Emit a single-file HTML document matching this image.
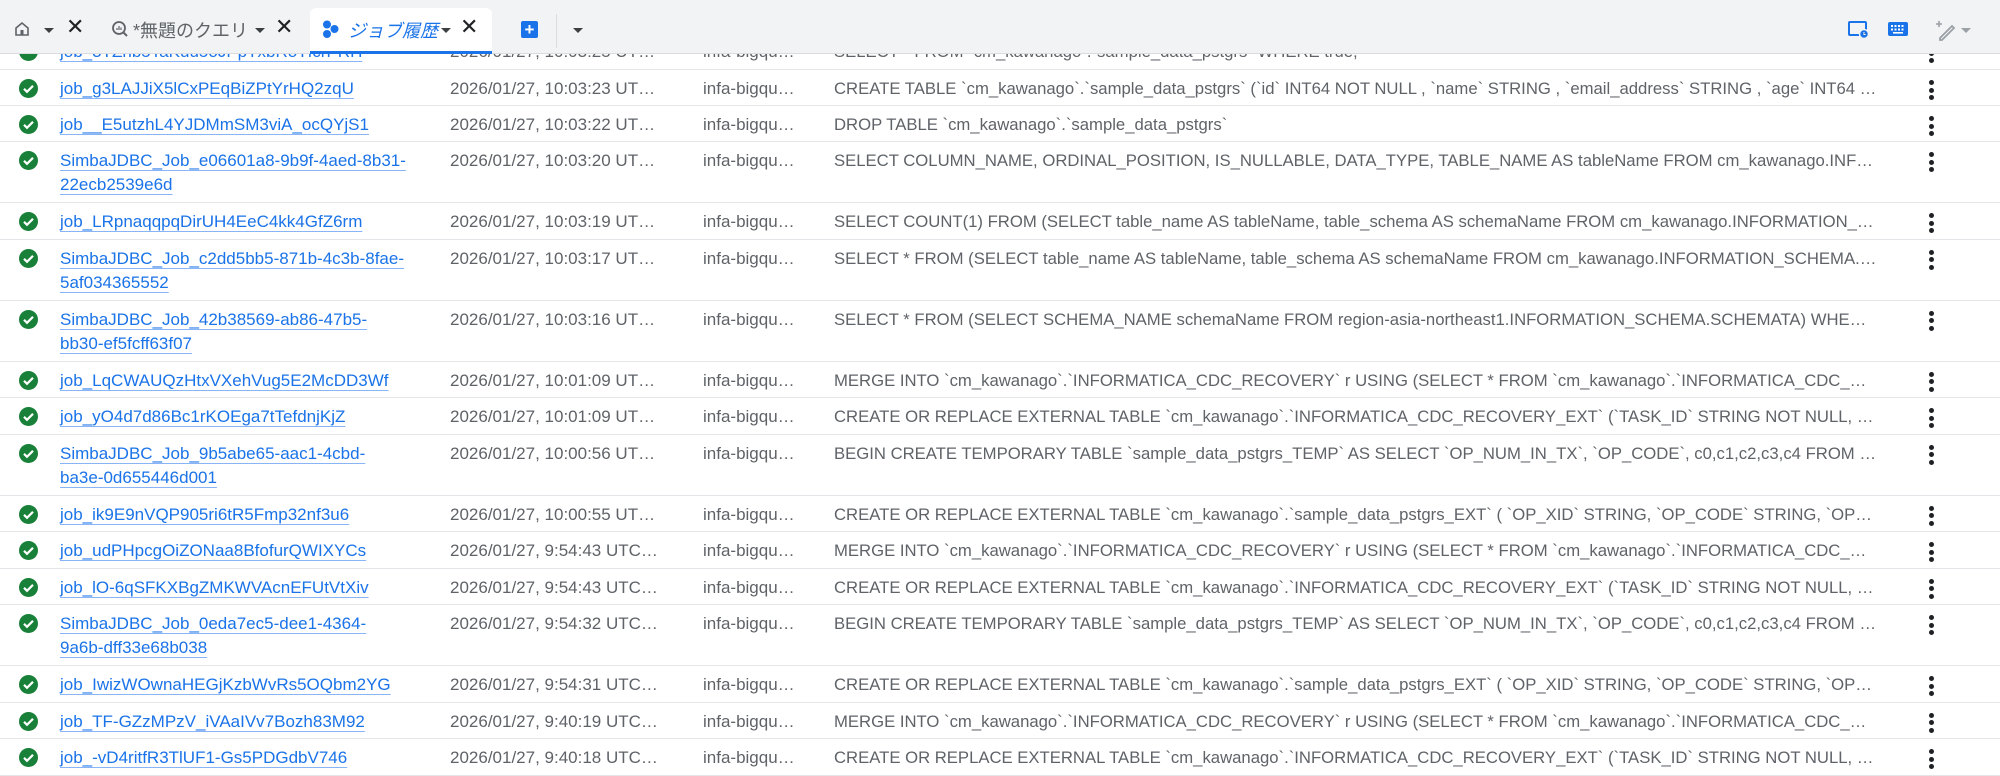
<!DOCTYPE html>
<html><head><meta charset="utf-8"><style>
*{margin:0;padding:0;box-sizing:border-box}
html,body{width:2000px;height:760px;overflow:hidden;background:#fff;font-family:"Liberation Sans","Noto Sans CJK JP",sans-serif;}
#hdr{position:absolute;left:0;top:0;width:2000px;height:54px;background:#f1f3f4;border-bottom:1px solid #dadce0;z-index:5}
.h{position:absolute;color:#3c4043;font-size:18px}
.dd{position:absolute;width:0;height:0;border-left:5px solid transparent;border-right:5px solid transparent;border-top:5px solid #3c4043;top:28px}
.r{position:absolute;left:0;width:2000px;border-bottom:1.5px solid #e3e5e8;font-size:17px;color:#5f6368}
.r .ck{position:absolute;left:19px;top:9px;width:19px;height:19px;border-radius:50%;background:#188038}
.r .ck svg{position:absolute;left:0;top:0}
.r .ln{position:absolute;left:60px;top:7px;width:360px;line-height:24px;color:#1a73e8;text-decoration:underline;text-decoration-color:#8ab4f8;text-underline-offset:4px;word-break:break-all}
.r .dt{position:absolute;left:450px;top:7px;line-height:24px;white-space:nowrap}
.r .pj{position:absolute;left:703px;top:7px;line-height:24px}
.r .q{position:absolute;left:834px;top:7px;width:1044px;line-height:24px;white-space:nowrap;overflow:hidden;text-overflow:ellipsis;font-size:16.7px}
.r .kb{position:absolute;left:1929px;top:10px;width:5px}
.r .kb i{display:block;width:5px;height:5px;border-radius:50%;background:#202124;margin-bottom:2.5px}
</style></head><body>
<div id="hdr">
 <svg class="h" style="left:14px;top:21px" width="16" height="16" viewBox="0 0 16 16"><path d="M2 7 L8 2 L14 7 V14 H2 Z" fill="none" stroke="#5f6368" stroke-width="1.6"/><rect x="6.5" y="9" width="3" height="5" fill="#5f6368"/></svg>
 <div class="dd" style="left:44px"></div>
 <div class="h" style="left:66px;top:14px;font-size:22px;color:#202124">✕</div>
 <svg class="h" style="left:111px;top:20px" width="18" height="18" viewBox="0 0 18 18"><circle cx="8" cy="8" r="6" fill="none" stroke="#5f6368" stroke-width="1.8"/><path d="M12.5 12.5 L16 16" stroke="#5f6368" stroke-width="2"/><path d="M6 10V8M8 10V6M10 10V7.5" stroke="#5f6368" stroke-width="1.2"/></svg>
 <div class="h" style="left:133px;top:17px;font-size:18px;color:#5f6368">*無題のクエリ</div>
 <div class="dd" style="left:255px"></div>
 <div class="h" style="left:275px;top:14px;font-size:22px;color:#202124">✕</div>
 <div style="position:absolute;left:310px;top:8px;width:182px;height:46px;background:#fff;border-radius:6px 6px 0 0;border-bottom:3px solid #1a73e8"></div>
 <svg class="h" style="left:322px;top:20px" width="18" height="18" viewBox="0 0 18 18"><circle cx="5" cy="4.5" r="4" fill="#1a73e8"/><circle cx="12.5" cy="9" r="4" fill="#1a73e8"/><circle cx="5" cy="14" r="4" fill="#1a73e8"/></svg>
 <div class="h" style="left:348px;top:17px;font-size:18px;color:#1a73e8;font-style:italic">ジョブ履歴</div>
 <div class="dd" style="left:441px"></div>
 <div class="h" style="left:460px;top:14px;font-size:22px;color:#202124">✕</div>
 <div style="position:absolute;left:521px;top:21px;width:17px;height:17px;background:#1a73e8;border-radius:2px;color:#fff;font-size:17px;line-height:17px;text-align:center;font-weight:bold">+</div>
 <div style="position:absolute;left:556px;top:14px;width:1px;height:34px;background:#dadce0"></div>
 <div class="dd" style="left:573px"></div>
 <svg class="h" style="left:1848px;top:20px" width="22" height="20" viewBox="0 0 22 20"><rect x="1" y="2" width="17" height="13" rx="1" fill="none" stroke="#1a73e8" stroke-width="2"/><circle cx="16" cy="14" r="4.5" fill="#1a73e8" stroke="#f1f3f4" stroke-width="1.5"/><path d="M16 12v2.5h1.5" stroke="#fff" stroke-width="1"/></svg>
 <svg class="h" style="left:1888px;top:22px" width="20" height="14" viewBox="0 0 20 14"><rect x="0" y="0" width="20" height="14" rx="2" fill="#1a73e8"/><g fill="#fff"><rect x="3" y="3" width="2" height="2"/><rect x="6.5" y="3" width="2" height="2"/><rect x="10" y="3" width="2" height="2"/><rect x="13.5" y="3" width="2" height="2"/><rect x="3" y="6.5" width="2" height="2"/><rect x="6.5" y="6.5" width="2" height="2"/><rect x="10" y="6.5" width="2" height="2"/><rect x="13.5" y="6.5" width="2" height="2"/><rect x="5" y="10" width="10" height="1.6"/></g></svg>
 <svg class="h" style="left:1935px;top:19px" width="22" height="22" viewBox="0 0 22 22"><path d="M5 19 L17 7 L19 9 L7 21 L5 21 Z" fill="none" stroke="#9aa0a6" stroke-width="1.8"/><path d="M4 2v6M1 5h6" stroke="#9aa0a6" stroke-width="1.6"/></svg>
 <div class="dd" style="left:1961px;border-top-color:#9aa0a6"></div>
</div>

<div class="r" style="top:33px;height:37px"><div class="ck"></div><div class="ln">job_3TZnb5TaKuu5oJPpTxbRoTfcrPRH</div><div class="dt">2026/01/27, 10:03:25 UT…</div><div class="pj">infa-bigqu…</div><div class="q">SELECT * FROM `cm_kawanago`.`sample_data_pstgrs` WHERE true;</div><div class="kb"><i></i><i></i><i></i></div></div>

<div class="r" style="top:70px;height:36px"><div class="ck"><svg width="19" height="19"><path d="M5 9.8l3 3 6-6" fill="none" stroke="#fff" stroke-width="2.2"/></svg></div><div class="ln">job_g3LAJJiX5lCxPEqBiZPtYrHQ2zqU</div><div class="dt">2026/01/27, 10:03:23 UT…</div><div class="pj">infa-bigqu…</div><div class="q">CREATE TABLE `cm_kawanago`.`sample_data_pstgrs` (`id` INT64 NOT NULL , `name` STRING , `email_address` STRING , `age` INT64 NOT NULL</div><div class="kb"><i></i><i></i><i></i></div></div>

<div class="r" style="top:106px;height:36px"><div class="ck"><svg width="19" height="19"><path d="M5 9.8l3 3 6-6" fill="none" stroke="#fff" stroke-width="2.2"/></svg></div><div class="ln">job__E5utzhL4YJDMmSM3viA_ocQYjS1</div><div class="dt">2026/01/27, 10:03:22 UT…</div><div class="pj">infa-bigqu…</div><div class="q">DROP TABLE `cm_kawanago`.`sample_data_pstgrs`</div><div class="kb"><i></i><i></i><i></i></div></div>

<div class="r" style="top:142px;height:61px"><div class="ck"><svg width="19" height="19"><path d="M5 9.8l3 3 6-6" fill="none" stroke="#fff" stroke-width="2.2"/></svg></div><div class="ln">SimbaJDBC_Job_e06601a8-9b9f-4aed-8b31-<br>22ecb2539e6d</div><div class="dt">2026/01/27, 10:03:20 UT…</div><div class="pj">infa-bigqu…</div><div class="q">SELECT COLUMN_NAME, ORDINAL_POSITION, IS_NULLABLE, DATA_TYPE, TABLE_NAME AS tableName FROM cm_kawanago.INFORMATION_SCHEMA</div><div class="kb"><i></i><i></i><i></i></div></div>

<div class="r" style="top:203px;height:36.5px"><div class="ck"><svg width="19" height="19"><path d="M5 9.8l3 3 6-6" fill="none" stroke="#fff" stroke-width="2.2"/></svg></div><div class="ln">job_LRpnaqqpqDirUH4EeC4kk4GfZ6rm</div><div class="dt">2026/01/27, 10:03:19 UT…</div><div class="pj">infa-bigqu…</div><div class="q">SELECT COUNT(1) FROM (SELECT table_name AS tableName, table_schema AS schemaName FROM cm_kawanago.INFORMATION_SCHEMA.TABLES</div><div class="kb"><i></i><i></i><i></i></div></div>

<div class="r" style="top:239.5px;height:61px"><div class="ck"><svg width="19" height="19"><path d="M5 9.8l3 3 6-6" fill="none" stroke="#fff" stroke-width="2.2"/></svg></div><div class="ln">SimbaJDBC_Job_c2dd5bb5-871b-4c3b-8fae-<br>5af034365552</div><div class="dt">2026/01/27, 10:03:17 UT…</div><div class="pj">infa-bigqu…</div><div class="q">SELECT * FROM (SELECT table_name AS tableName, table_schema AS schemaName FROM cm_kawanago.INFORMATION_SCHEMA.TABLES</div><div class="kb"><i></i><i></i><i></i></div></div>

<div class="r" style="top:300.5px;height:61px"><div class="ck"><svg width="19" height="19"><path d="M5 9.8l3 3 6-6" fill="none" stroke="#fff" stroke-width="2.2"/></svg></div><div class="ln">SimbaJDBC_Job_42b38569-ab86-47b5-<br>bb30-ef5fcff63f07</div><div class="dt">2026/01/27, 10:03:16 UT…</div><div class="pj">infa-bigqu…</div><div class="q">SELECT * FROM (SELECT SCHEMA_NAME schemaName FROM region-asia-northeast1.INFORMATION_SCHEMA.SCHEMATA) WHERE schemaName</div><div class="kb"><i></i><i></i><i></i></div></div>

<div class="r" style="top:361.5px;height:36.5px"><div class="ck"><svg width="19" height="19"><path d="M5 9.8l3 3 6-6" fill="none" stroke="#fff" stroke-width="2.2"/></svg></div><div class="ln">job_LqCWAUQzHtxVXehVug5E2McDD3Wf</div><div class="dt">2026/01/27, 10:01:09 UT…</div><div class="pj">infa-bigqu…</div><div class="q">MERGE INTO `cm_kawanago`.`INFORMATICA_CDC_RECOVERY` r USING (SELECT * FROM `cm_kawanago`.`INFORMATICA_CDC_RECOVERY_EXT`</div><div class="kb"><i></i><i></i><i></i></div></div>

<div class="r" style="top:398px;height:36.5px"><div class="ck"><svg width="19" height="19"><path d="M5 9.8l3 3 6-6" fill="none" stroke="#fff" stroke-width="2.2"/></svg></div><div class="ln">job_yO4d7d86Bc1rKOEga7tTefdnjKjZ</div><div class="dt">2026/01/27, 10:01:09 UT…</div><div class="pj">infa-bigqu…</div><div class="q">CREATE OR REPLACE EXTERNAL TABLE `cm_kawanago`.`INFORMATICA_CDC_RECOVERY_EXT` (`TASK_ID` STRING NOT NULL, `TYPE` STRING</div><div class="kb"><i></i><i></i><i></i></div></div>

<div class="r" style="top:434.5px;height:61px"><div class="ck"><svg width="19" height="19"><path d="M5 9.8l3 3 6-6" fill="none" stroke="#fff" stroke-width="2.2"/></svg></div><div class="ln">SimbaJDBC_Job_9b5abe65-aac1-4cbd-<br>ba3e-0d655446d001</div><div class="dt">2026/01/27, 10:00:56 UT…</div><div class="pj">infa-bigqu…</div><div class="q">BEGIN CREATE TEMPORARY TABLE `sample_data_pstgrs_TEMP` AS SELECT `OP_NUM_IN_TX`, `OP_CODE`, c0,c1,c2,c3,c4 FROM ( SELECT</div><div class="kb"><i></i><i></i><i></i></div></div>

<div class="r" style="top:495.5px;height:36.5px"><div class="ck"><svg width="19" height="19"><path d="M5 9.8l3 3 6-6" fill="none" stroke="#fff" stroke-width="2.2"/></svg></div><div class="ln">job_ik9E9nVQP905ri6tR5Fmp32nf3u6</div><div class="dt">2026/01/27, 10:00:55 UT…</div><div class="pj">infa-bigqu…</div><div class="q">CREATE OR REPLACE EXTERNAL TABLE `cm_kawanago`.`sample_data_pstgrs_EXT` ( `OP_XID` STRING, `OP_CODE` STRING, `OP_CMT_TIME`</div><div class="kb"><i></i><i></i><i></i></div></div>

<div class="r" style="top:532px;height:36.5px"><div class="ck"><svg width="19" height="19"><path d="M5 9.8l3 3 6-6" fill="none" stroke="#fff" stroke-width="2.2"/></svg></div><div class="ln">job_udPHpcgOiZONaa8BfofurQWIXYCs</div><div class="dt">2026/01/27, 9:54:43 UTC…</div><div class="pj">infa-bigqu…</div><div class="q">MERGE INTO `cm_kawanago`.`INFORMATICA_CDC_RECOVERY` r USING (SELECT * FROM `cm_kawanago`.`INFORMATICA_CDC_RECOVERY_EXT`</div><div class="kb"><i></i><i></i><i></i></div></div>

<div class="r" style="top:568.5px;height:36.5px"><div class="ck"><svg width="19" height="19"><path d="M5 9.8l3 3 6-6" fill="none" stroke="#fff" stroke-width="2.2"/></svg></div><div class="ln">job_lO-6qSFKXBgZMKWVAcnEFUtVtXiv</div><div class="dt">2026/01/27, 9:54:43 UTC…</div><div class="pj">infa-bigqu…</div><div class="q">CREATE OR REPLACE EXTERNAL TABLE `cm_kawanago`.`INFORMATICA_CDC_RECOVERY_EXT` (`TASK_ID` STRING NOT NULL, `TYPE` STRING</div><div class="kb"><i></i><i></i><i></i></div></div>

<div class="r" style="top:605px;height:61px"><div class="ck"><svg width="19" height="19"><path d="M5 9.8l3 3 6-6" fill="none" stroke="#fff" stroke-width="2.2"/></svg></div><div class="ln">SimbaJDBC_Job_0eda7ec5-dee1-4364-<br>9a6b-dff33e68b038</div><div class="dt">2026/01/27, 9:54:32 UTC…</div><div class="pj">infa-bigqu…</div><div class="q">BEGIN CREATE TEMPORARY TABLE `sample_data_pstgrs_TEMP` AS SELECT `OP_NUM_IN_TX`, `OP_CODE`, c0,c1,c2,c3,c4 FROM ( SELECT</div><div class="kb"><i></i><i></i><i></i></div></div>

<div class="r" style="top:666px;height:36.5px"><div class="ck"><svg width="19" height="19"><path d="M5 9.8l3 3 6-6" fill="none" stroke="#fff" stroke-width="2.2"/></svg></div><div class="ln">job_IwizWOwnaHEGjKzbWvRs5OQbm2YG</div><div class="dt">2026/01/27, 9:54:31 UTC…</div><div class="pj">infa-bigqu…</div><div class="q">CREATE OR REPLACE EXTERNAL TABLE `cm_kawanago`.`sample_data_pstgrs_EXT` ( `OP_XID` STRING, `OP_CODE` STRING, `OP_CMT_TIME`</div><div class="kb"><i></i><i></i><i></i></div></div>

<div class="r" style="top:702.5px;height:36.5px"><div class="ck"><svg width="19" height="19"><path d="M5 9.8l3 3 6-6" fill="none" stroke="#fff" stroke-width="2.2"/></svg></div><div class="ln">job_TF-GZzMPzV_iVAaIVv7Bozh83M92</div><div class="dt">2026/01/27, 9:40:19 UTC…</div><div class="pj">infa-bigqu…</div><div class="q">MERGE INTO `cm_kawanago`.`INFORMATICA_CDC_RECOVERY` r USING (SELECT * FROM `cm_kawanago`.`INFORMATICA_CDC_RECOVERY_EXT`</div><div class="kb"><i></i><i></i><i></i></div></div>

<div class="r" style="top:739px;height:36.5px"><div class="ck"><svg width="19" height="19"><path d="M5 9.8l3 3 6-6" fill="none" stroke="#fff" stroke-width="2.2"/></svg></div><div class="ln">job_-vD4ritfR3TlUF1-Gs5PDGdbV746</div><div class="dt">2026/01/27, 9:40:18 UTC…</div><div class="pj">infa-bigqu…</div><div class="q">CREATE OR REPLACE EXTERNAL TABLE `cm_kawanago`.`INFORMATICA_CDC_RECOVERY_EXT` (`TASK_ID` STRING NOT NULL, `TYPE` STRING</div><div class="kb"><i></i><i></i><i></i></div></div>
</body></html>
